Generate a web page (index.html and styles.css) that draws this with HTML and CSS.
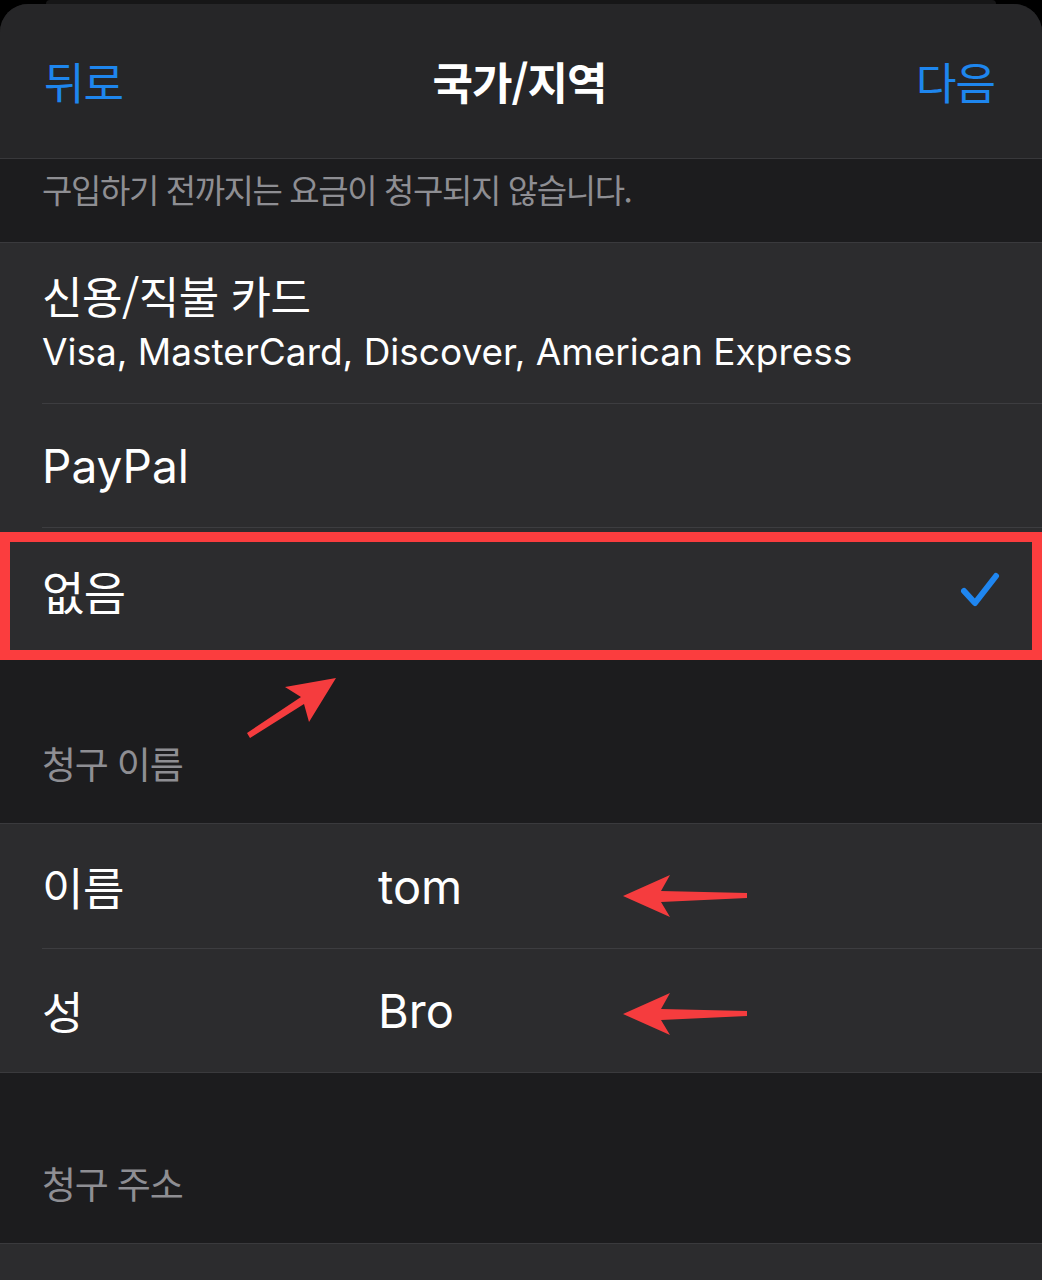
FILE: index.html
```html
<!DOCTYPE html>
<html lang="ko">
<head>
<meta charset="utf-8">
<title>국가/지역</title>
<link rel="stylesheet" href="styles.css">
</head>
<body>
<div class="backdrop"></div>
<div class="sheet">
  <header class="nav">
    <span class="nav-btn ko">뒤로</span>
    <h1 class="nav-title ko">국가/지역</h1>
    <span class="nav-btn nav-next ko">다음</span>
  </header>
  <p class="section-footer ko">구입하기 전까지는 요금이 청구되지 않습니다.</p>
  <ul class="group">
    <li class="cell">
      <div class="cell-inner cell-card">
        <div class="cell-title ko">신용/직불 카드</div>
        <div class="cell-sub">Visa, MasterCard, Discover, American Express</div>
      </div>
    </li>
    <li class="cell">
      <div class="cell-inner"><span class="cell-label">PayPal</span></div>
    </li>
    <li class="cell">
      <div class="cell-inner cell-last">
        <span class="cell-label ko">없음</span>
        <svg class="check" width="40" height="36" viewBox="0 0 40 36"><path d="M4 19 L15 31 L36 4" fill="none" stroke="#1f86f0" stroke-width="6" stroke-linecap="round" stroke-linejoin="round"/></svg>
      </div>
    </li>
  </ul>
  <h2 class="section-header ko">청구 이름</h2>
  <ul class="group">
    <li class="cell">
      <div class="cell-inner cell-row"><span class="field-label ko">이름</span><span class="field-value">tom</span></div>
    </li>
    <li class="cell">
      <div class="cell-inner cell-last"><span class="field-label ko">성</span><span class="field-value">Bro</span></div>
    </li>
  </ul>
  <h2 class="section-header section-header-2 ko">청구 주소</h2>
  <ul class="group group-open">
    <li class="cell"><div class="cell-inner cell-last"></div></li>
  </ul>
</div>
<svg class="annotations" width="1042" height="1280" viewBox="0 0 1042 1280">
  <rect x="5" y="537" width="1032" height="118" fill="none" stroke="#fb3d3e" stroke-width="10"/>
  <polygon points="336,678 285,687 301,697 247,733 250,738 304,704 309,722" fill="#f53c3e"/>
  <polygon points="623,896 670,875 661,891 747,893 747,898 661,902 670,917" fill="#f53c3e"/>
  <polygon points="623,1014 670,993 661,1009 747,1011 747,1016 661,1020 670,1035" fill="#f53c3e"/>
</svg>
</body>
</html>
```

FILE: styles.css
```css
html, body {
  margin: 0;
  padding: 0;
  background: #000;
}

body {
  position: relative;
  width: 1042px;
  height: 1280px;
  overflow: hidden;
  font-family: "Inter", "Noto Sans CJK KR", sans-serif;
  color: #fff;
}

.ko {
  font-family: "Noto Sans CJK KR", sans-serif;
  letter-spacing: -0.5px;
}

.backdrop {
  height: 4px;
  margin: 0 46px;
  background: #161617;
  border-radius: 10px 10px 0 0;
}

.sheet {
  height: 1276px;
  background: #1c1c1e;
  border-radius: 28px 28px 0 0;
  overflow: hidden;
}

.nav {
  height: 154px;
  display: grid;
  grid-template-columns: 1fr auto 1fr;
  align-items: center;
  padding: 0 47px 0 44px;
  background: #262628;
  border-bottom: 1px solid #38383b;
}

.nav-btn {
  font-size: 44px;
  letter-spacing: -1px;
  color: #1e86ee;
}

.nav-next {
  justify-self: end;
}

.nav-title {
  margin: 0;
  font-size: 44px;
  font-weight: 700;
  letter-spacing: -1px;
}

.section-footer {
  margin: 0;
  height: 83px;
  box-sizing: border-box;
  padding: 8px 0 0 42px;
  font-size: 33px;
  letter-spacing: -1.4px;
  line-height: 44px;
  color: #8e8e93;
}

.group {
  list-style: none;
  margin: 0;
  padding: 0;
  background: #2c2c2e;
  border-top: 1px solid #3a3a3d;
  border-bottom: 1px solid #3a3a3d;
}

.group-open {
  border-bottom: none;
}

.cell {
  padding-left: 42px;
}

.cell-inner {
  height: 123px;
  display: flex;
  align-items: center;
  padding-right: 42px;
  border-bottom: 1px solid #3d3d40;
}

.cell-row {
  height: 124px;
}

.cell-last {
  border-bottom: none;
}

.cell-card {
  height: 161px;
  flex-direction: column;
  align-items: flex-start;
  justify-content: flex-start;
  padding-top: 26px;
  box-sizing: border-box;
}

.cell-title {
  font-size: 44px;
  line-height: 52px;
}

.cell-sub {
  margin-top: 5px;
  font-size: 37px;
  line-height: 52px;
}

.cell-label {
  font-size: 46px;
}

.check {
  margin-left: auto;
  margin-right: 0;
}

.field-label {
  width: 336px;
  font-size: 45px;
}

.field-value {
  font-size: 47px;
}

.section-header {
  margin: 0;
  height: 171px;
  box-sizing: border-box;
  display: flex;
  align-items: flex-end;
  padding: 0 0 38px 42px;
  font-size: 37px;
  font-weight: 400;
  letter-spacing: -1.2px;
  line-height: 44px;
  color: #8e8e93;
}

.section-header-2 {
  height: 170px;
}

.annotations {
  position: absolute;
  top: 0;
  left: 0;
  pointer-events: none;
}
```
